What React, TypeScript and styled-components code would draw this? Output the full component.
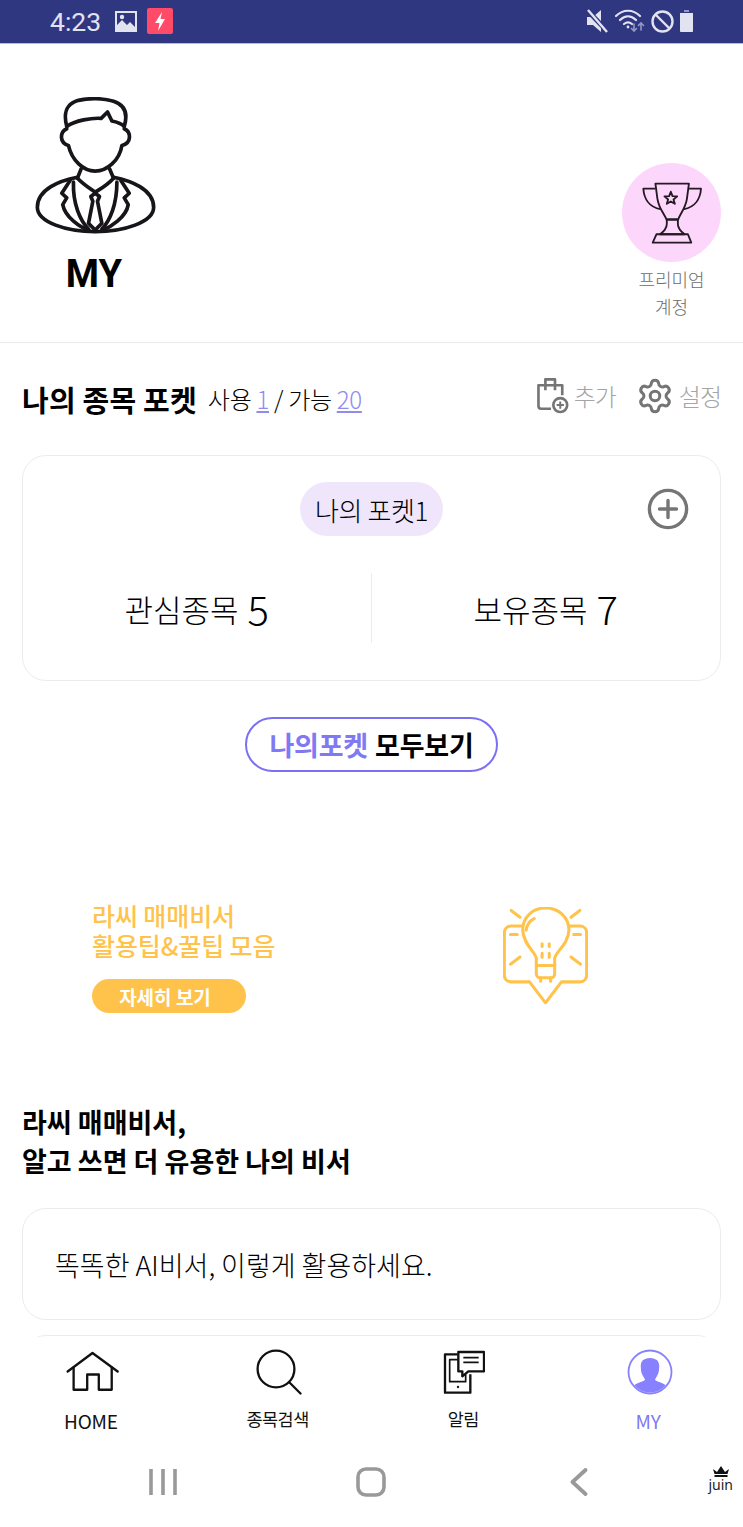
import * as React from "react";
import styled, { createGlobalStyle } from "styled-components";
import { Settings } from "lucide-react";

const GlobalStyle = createGlobalStyle`
    html, body { margin: 0; padding: 0; background: #fff; }
    body { font-family: "Noto Sans CJK KR", "Noto Sans", sans-serif; }
    * { box-sizing: border-box; }
`;

const Screen = styled.div`
    width: 743px;
    height: 1527px;
    display: flex;
    flex-direction: column;
    overflow: hidden;
    color: #000;
`;

const StatusBar = styled.div`
    height: 44px;
    flex: none;
    background: #303781;
    border-bottom: 1px solid #b9bbd6;
    display: flex;
    align-items: center;
    justify-content: space-between;
    padding: 0 49px 1px 50px;
    color: #e2e3f1;
`;

const StatusGroup = styled.div`
    display: flex;
    align-items: center;
    gap: ${({ $gap }: { $gap: number }) => $gap}px;
`;

const Clock = styled.span`
    font-family: Roboto, sans-serif;
    font-size: 26.5px;
    margin-right: 4px;
`;

const Main = styled.main`
    flex: 1;
    min-height: 0;
    overflow: hidden;
`;

const Profile = styled.section`
    height: 299px;
    border-bottom: 1px solid #ececec;
    display: flex;
    justify-content: space-between;
    padding: 53px 22px 0 35px;
`;

const Identity = styled.div`
    width: 120px;
    display: flex;
    flex-direction: column;
    align-items: center;
`;

const IdentityName = styled.div`
    font-family: Roboto, sans-serif;
    font-size: 38px;
    font-weight: 700;
    line-height: 44px;
    margin: 18px 2px 0 0;
`;

const Premium = styled.div`
    width: 99px;
    margin-top: 66px;
    display: flex;
    flex-direction: column;
    align-items: center;
`;

const TrophyCircle = styled.div`
    width: 99px;
    height: 99px;
    border-radius: 50%;
    background: #fdd7fb;
    display: flex;
    align-items: center;
    justify-content: center;
`;

const PremiumLabel = styled.div`
    margin-top: 4px;
    font-size: 18px;
    line-height: 27px;
    color: #6c6c6c;
    text-align: center;
    font-weight: 300;
`;

const PocketHeader = styled.section`
    display: flex;
    align-items: center;
    height: 112px;
    padding: 0 22px;
`;

const PocketTitle = styled.h2`
    margin: 0 11px 0 0;
    font-size: 29px;
    font-weight: 700;
    line-height: 40px;
    letter-spacing: 0.2px;
`;

const Usage = styled.div`
    font-size: 24px;
    line-height: 40px;
    flex: 1;
    font-weight: 300;
    letter-spacing: -0.3px;
`;

const UsageCount = styled.span`
    color: #8f8bf0;
    text-decoration: underline;
`;

const HeaderAction = styled.div`
    display: flex;
    align-items: center;
    gap: 5px;
    margin-left: 20px;
    margin-top: -7px;
    font-size: 24px;
    font-weight: 300;
    letter-spacing: -1px;
    color: #a5a5a5;
`;

const PocketCard = styled.section`
    margin: 0 22px;
    height: 226px;
    border: 1px solid #ececec;
    border-radius: 24px;
    display: flex;
    flex-direction: column;
    position: relative;
`;

const PocketName = styled.div`
    align-self: center;
    margin-top: 26px;
    height: 54px;
    padding: 0 15px;
    border-radius: 27px;
    background: #f0e6fb;
    font-size: 26px;
    font-weight: 300;
    letter-spacing: -0.4px;
    display: flex;
    align-items: center;
`;

const AddPocket = styled.div`
    position: absolute;
    top: 32px;
    right: 31px;
    line-height: 0;
`;

const Stats = styled.div`
    display: grid;
    grid-template-columns: 1fr 1fr;
    margin-top: 37px;
    height: 70px;
`;

const Stat = styled.div`
    display: flex;
    align-items: center;
    justify-content: center;
    gap: 9px;
    font-size: 31px;
    font-weight: 300;
    &:first-child { border-right: 1px solid #ececec; }
`;

const StatValue = styled.span`
    font-size: 40px;
    line-height: 1;
`;

const ViewAllRow = styled.div`
    display: flex;
    justify-content: center;
    margin-top: 36px;
`;

const ViewAll = styled.div`
    height: 55px;
    width: 253px;
    border: 2px solid #7c70f2;
    border-radius: 28px;
    display: flex;
    align-items: center;
    justify-content: center;
    font-size: 27px;
    font-weight: 700;
    letter-spacing: -0.2px;
`;

const Accent = styled.span`
    color: #8079f3;
    margin-right: 7px;
`;

const Banner = styled.section`
    height: 160px;
    margin-top: 108px;
    padding: 0 155px 0 92px;
    display: flex;
    align-items: flex-start;
    justify-content: space-between;
`;

const BannerCopy = styled.div`
    padding-top: 20px;
`;

const BannerTitle = styled.div`
    font-size: 25px;
    line-height: 30px;
    font-weight: 500;
    color: #ffc34c;
    letter-spacing: -0.1px;
`;

const BannerButton = styled.div`
    width: 154px;
    height: 34px;
    margin-top: 19px;
    padding-right: 8px;
    border-radius: 17px;
    background: #ffc34c;
    color: #fff;
    font-size: 19px;
    font-weight: 700;
    display: flex;
    align-items: center;
    justify-content: center;
`;

const BannerIcon = styled.div`
    padding-top: 27px;
    line-height: 0;
`;

const GuideTitle = styled.h2`
    margin: 62px 22px 28px;
    font-size: 27px;
    line-height: 39px;
    font-weight: 700;
`;

const GuideCard = styled.div`
    margin: 0 22px 15px;
    height: 112px;
    border: 1px solid #ececec;
    border-radius: 24px;
    padding: 0 32px;
    display: flex;
    align-items: center;
    font-size: 27px;
    font-weight: 300;
`;

const TabBar = styled.nav`
    flex: none;
    height: 108px;
    display: grid;
    grid-template-columns: repeat(4, 1fr);
    background: #fff;
`;

const Tab = styled.div<{ $active?: boolean }>`
    display: flex;
    flex-direction: column;
    align-items: center;
    padding-top: 9px;
    color: ${({ $active }) => ($active ? "#8079f3" : "#111")};
`;

const TabIcon = styled.div`
    height: 52px;
    display: flex;
    align-items: center;
    justify-content: center;
`;

const TabLabel = styled.div<{ $latin?: boolean }>`
    margin-top: ${({ $latin }) => ($latin ? 9 : 7)}px;
    padding-right: ${({ $latin }) => ($latin ? 4 : 2)}px;
    font-size: ${({ $latin }) => ($latin ? 19 : 17.5)}px;
    line-height: 28px;
    letter-spacing: ${({ $latin }) => ($latin ? -0.2 : -0.5)}px;
`;

const SystemNav = styled.div`
    flex: none;
    height: 82px;
    position: relative;
    display: grid;
    grid-template-columns: 177px 209px 202px;
    justify-content: start;
    align-items: center;
    padding-bottom: 8px;
    & > svg { justify-self: end; }
`;

const Watermark = styled.div`
    position: absolute;
    right: 10px;
    top: 21px;
    display: flex;
    flex-direction: column;
    align-items: center;
    font-family: "Noto Sans", sans-serif;
    font-size: 14px;
    line-height: 16px;
    color: #222;
`;

const PersonIcon = () => (
    <svg width="121" height="137" viewBox="105 290 362 410" fill="none" stroke="#17141a" strokeWidth="11" strokeLinecap="round" strokeLinejoin="round">
        <path d="M200 378C190 340 195 312 235 300C265 293 310 293 340 303C378 315 382 345 372 378" />
        <path d="M200 378C225 360 275 352 303 354L322 335L335 362C350 365 365 372 372 378" />
        <path d="M200 385C178 395 178 428 205 435C215 480 250 512 285 512C320 512 358 480 365 435C394 428 394 395 372 385" />
        <path d="M243 505L232 533M328 505L340 533" />
        <path d="M232 530C180 540 112 565 112 620C112 665 200 693 285 693C370 693 460 665 460 620C460 565 390 540 340 530" />
        <path d="M232 533C250 552 272 565 285 575C300 565 320 555 340 533" />
        <path d="M210 540L185 578L200 592L188 612C195 650 240 680 268 690M362 540L387 578L372 592L384 612C378 650 330 680 305 690" />
        <path d="M220 545C218 610 240 660 265 685M350 545C350 610 330 660 305 685" />
        <path d="M272 588L285 578L298 588L292 602L305 668L285 688L265 668L278 602Z" />
    </svg>
);

const TrophyIcon = () => (
    <svg width="62" height="62" viewBox="125 100 185 185" fill="none" stroke="#231a24" strokeWidth="5.5" strokeLinejoin="round">
        <path d="M168 105H268L262 150C258 178 240 198 236 212H201C196 198 178 178 174 150Z" />
        <path d="M168 120H132C134 150 150 175 183 181M268 120H304C302 150 286 175 253 181" />
        <path d="M202 212H235V225C235 240 245 248 255 256H182C192 248 202 240 202 225Z" />
        <path d="M171 256H265L275 281H160Z" />
        <path d="M214 129L219 142L233 143L222 152L226 165L214 158L202 165L206 152L195 143L209 142Z" />
    </svg>
);

const BagAddIcon = () => (
    <svg width="32" height="37" viewBox="50 45 96 112" fill="none" stroke="#757575" strokeWidth="8" strokeLinejoin="round">
        <path d="M92 141H62C57 141 54 138 54 133V70H126V100" />
        <path d="M75 85V52H104V85" />
        <circle cx="120" cy="130" r="21" />
        <path d="M120 119V141M109 130H131" strokeWidth="6" />
    </svg>
);

const CirclePlusIcon = () => (
    <svg width="42" height="42" viewBox="0 0 42 42" fill="none" stroke="#757575" strokeWidth="3.4" strokeLinecap="round">
        <circle cx="21" cy="21" r="18.6" />
        <path d="M21 12.5V29.5M12.5 21H29.5" />
    </svg>
);

const BulbIcon = () => (
    <svg width="85" height="97" viewBox="72 50 250 285" fill="none" stroke="#ffc34c" strokeWidth="9" strokeLinecap="round" strokeLinejoin="round">
        <path d="M130 106H96C84 106 76 114 76 126V250C76 262 84 270 96 270H150L197 332L244 270H298C310 270 318 262 318 250V126C318 114 310 106 298 106H264" />
        <path d="M170 222V200C165 180 132 160 130 118C130 78 160 53 197 53C234 53 266 78 266 118C264 160 228 180 224 200V222Z" />
        <path d="M170 222H224V246C224 254 218 258 212 258H182C176 258 170 254 170 246Z" />
        <path d="M183 258V268M212 258V268" />
        <path d="M140 118C142 100 152 90 164 84" />
        <path d="M187 158V166M208 158V166M187 186V198M208 186V198" />
        <path d="M96 60L122 80M298 60L272 80M94 131H114M280 131H300M94 218L122 197M300 218L272 197" />
    </svg>
);

const HomeIcon = () => (
    <svg width="53" height="42" viewBox="198 55 160 125" fill="none" stroke="#111" strokeWidth="7" strokeLinecap="round" strokeLinejoin="round">
        <path d="M203 116L278 60L354 116" />
        <path d="M221 104V171H262V125H297V171H336V104" />
    </svg>
);

const SearchIcon = () => (
    <svg width="46" height="46" viewBox="0 0 46 46" fill="none" stroke="#111" strokeWidth="2.3" strokeLinecap="round">
        <circle cx="20" cy="20" r="18.4" />
        <path d="M33 33L44.5 44.5" />
    </svg>
);

const AlertIcon = () => (
    <svg width="42" height="44" viewBox="212 55 126 132" fill="none" stroke="#111" strokeWidth="7" strokeLinejoin="round">
        <path d="M256 68H218V183H294V128" />
        <path d="M256 84H232V150H280V128" strokeWidth="5" />
        <path d="M258 61H335V119H288L270 134V119H258Z" fill="#fff" />
        <path d="M273 78H319M273 92H319" strokeWidth="5" />
        <circle cx="257" cy="166" r="3.5" fill="#111" stroke="none" />
    </svg>
);

const MyIcon = () => (
    <svg width="46" height="46" viewBox="0 0 46 46">
        <defs>
            <clipPath id="my-clip"><circle cx="23" cy="23" r="20.5" /></clipPath>
        </defs>
        <circle cx="23" cy="23" r="21.5" fill="none" stroke="#8781ff" strokeWidth="1.8" />
        <g clipPath="url(#my-clip)" fill="#8781ff">
            <path d="M23 9C16 9 13.5 13 13.8 18C14 21 14 24 16 27C17 29 18 30 18 31C15 33 9 34 5 38V46H41V38C37 34 31 33 28 31C28 30 29 29 30 27C32 24 32 21 32.2 18C32.5 13 30 9 23 9Z" />
        </g>
    </svg>
);

const MenuKey = () => (
    <svg width="28" height="28" viewBox="0 0 28 28" stroke="#999" strokeWidth="3.6"><path d="M2 1V27M14 1V27M26 1V27" /></svg>
);

const HomeKey = () => (
    <svg width="30" height="30" viewBox="0 0 30 30" fill="none" stroke="#999" strokeWidth="3.6"><rect x="2" y="2" width="26" height="26" rx="8" /></svg>
);

const BackKey = () => (
    <svg width="18" height="28" viewBox="0 0 18 28" fill="none" stroke="#999" strokeWidth="3.8" strokeLinecap="round" strokeLinejoin="round"><path d="M15.5 2L2.5 14L15.5 26" /></svg>
);

const CrownIcon = () => (
    <svg width="16" height="11" viewBox="0 0 16 11" fill="#111"><path d="M0 3L4 6L8 0L12 6L16 3L14.5 8H1.5ZM1.5 9H14.5V11H1.5Z" /></svg>
);

const StatusIcons = {
    Image: () => (
        <svg width="22" height="21" viewBox="0 0 22 21">
            <path fillRule="evenodd" fill="#e2e3f1" d="M0 0H22V21H0ZM2 2V14L7 9L12 14L15 11L20 16V2Z" />
            <circle cx="7" cy="6" r="2.2" fill="#e2e3f1" />
        </svg>
    ),
    Flash: () => (
        <svg width="26" height="26" viewBox="0 0 26 26">
            <rect width="26" height="26" rx="2" fill="#ff4a68" />
            <path d="M15 4L8 15H12.5L11 23L18 11H13.5Z" fill="#fff" />
        </svg>
    ),
    Mute: () => (
        <svg width="24" height="24" viewBox="0 0 24 24" fill="#e2e3f1">
            <path d="M1 8H7L15 1V23L7 16H1Z" />
            <path d="M1 1L22 23" stroke="#303781" strokeWidth="5" />
            <path d="M2 1L21 23" stroke="#e2e3f1" strokeWidth="2.4" />
        </svg>
    ),
    Wifi: () => (
        <svg width="30" height="24" viewBox="0 0 30 24" fill="none" stroke="#e2e3f1" strokeWidth="2.2" strokeLinecap="round">
            <path d="M1 7C8 0 18 0 25 7M5 11C10 6 16 6 21 11M9 15C11.5 13 14.5 13 17 15" />
            <circle cx="13" cy="18" r="1.4" fill="#e2e3f1" stroke="none" />
            <path d="M19 15V22M16.5 19.5L19 22L21.5 19.5" stroke="#9497c4" strokeWidth="1.6" />
            <path d="M26 21V14M23.5 16.5L26 14L28.5 16.5" stroke="#9497c4" strokeWidth="1.6" />
        </svg>
    ),
    Blocked: () => (
        <svg width="23" height="23" viewBox="0 0 23 23" fill="none" stroke="#e2e3f1" strokeWidth="2.4">
            <circle cx="11.5" cy="11.5" r="10" />
            <path d="M4.5 4.5L18.5 18.5" />
        </svg>
    ),
    Battery: () => (
        <svg width="15" height="22" viewBox="0 0 15 22" fill="#e2e3f1">
            <path d="M5 0H10V2H5Z" fill="#9497c4" />
            <path d="M1 3H14V21C14 21.5 13.5 22 13 22H2C1.5 22 1 21.5 1 21Z" />
        </svg>
    ),
};

export default function App() {
    return (
        <Screen>
            <GlobalStyle />
            <StatusBar>
                <StatusGroup $gap={10}>
                    <Clock>4:23</Clock>
                    <StatusIcons.Image />
                    <StatusIcons.Flash />
                </StatusGroup>
                <StatusGroup $gap={5.5}>
                    <StatusIcons.Mute />
                    <StatusIcons.Wifi />
                    <StatusIcons.Blocked />
                    <StatusIcons.Battery />
                </StatusGroup>
            </StatusBar>
            <Main>
                <Profile>
                    <Identity>
                        <PersonIcon />
                        <IdentityName>MY</IdentityName>
                    </Identity>
                    <Premium>
                        <TrophyCircle><TrophyIcon /></TrophyCircle>
                        <PremiumLabel>프리미엄<br />계정</PremiumLabel>
                    </Premium>
                </Profile>
                <PocketHeader>
                    <PocketTitle>나의 종목 포켓</PocketTitle>
                    <Usage>사용 <UsageCount>1</UsageCount> / 가능 <UsageCount>20</UsageCount></Usage>
                    <HeaderAction><BagAddIcon />추가</HeaderAction>
                    <HeaderAction><Settings size={38} color="#757575" strokeWidth={1.9} />설정</HeaderAction>
                </PocketHeader>
                <PocketCard>
                    <PocketName>나의 포켓1</PocketName>
                    <AddPocket><CirclePlusIcon /></AddPocket>
                    <Stats>
                        <Stat>관심종목 <StatValue>5</StatValue></Stat>
                        <Stat>보유종목 <StatValue>7</StatValue></Stat>
                    </Stats>
                </PocketCard>
                <ViewAllRow>
                    <ViewAll><Accent>나의포켓</Accent>모두보기</ViewAll>
                </ViewAllRow>
                <Banner>
                    <BannerCopy>
                        <BannerTitle>라씨 매매비서<br />활용팁&꿀팁 모음</BannerTitle>
                        <BannerButton>자세히 보기</BannerButton>
                    </BannerCopy>
                    <BannerIcon><BulbIcon /></BannerIcon>
                </Banner>
                <GuideTitle>라씨 매매비서,<br />알고 쓰면 더 유용한 나의 비서</GuideTitle>
                <GuideCard>똑똑한 AI비서, 이렇게 활용하세요.</GuideCard>
                <GuideCard />
            </Main>
            <TabBar>
                <Tab><TabIcon><HomeIcon /></TabIcon><TabLabel $latin>HOME</TabLabel></Tab>
                <Tab><TabIcon><SearchIcon /></TabIcon><TabLabel>종목검색</TabLabel></Tab>
                <Tab><TabIcon><AlertIcon /></TabIcon><TabLabel>알림</TabLabel></Tab>
                <Tab $active><TabIcon><MyIcon /></TabIcon><TabLabel $latin>MY</TabLabel></Tab>
            </TabBar>
            <SystemNav>
                <MenuKey />
                <HomeKey />
                <BackKey />
                <Watermark><CrownIcon />juin</Watermark>
            </SystemNav>
        </Screen>
    );
}
